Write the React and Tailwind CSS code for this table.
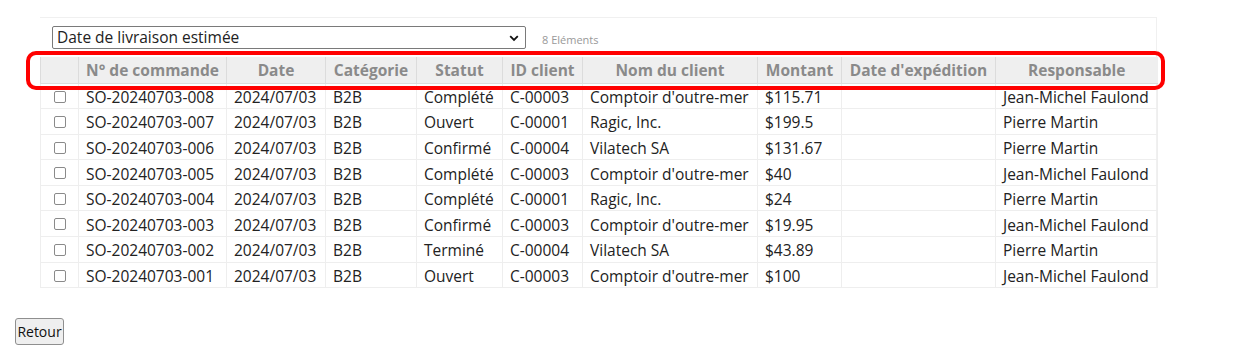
import React from "react";

const cols = [
  { label: "", w: 38 },
  { label: "N° de commande", w: 148 },
  { label: "Date", w: 99 },
  { label: "Catégorie", w: 91 },
  { label: "Statut", w: 86 },
  { label: "ID client", w: 80 },
  { label: "Nom du client", w: 175 },
  { label: "Montant", w: 84 },
  { label: "Date d'expédition", w: 154 },
  { label: "Responsable", w: 162 },
];

const rows = [
  ["SO-20240703-008", "2024/07/03", "B2B", "Complété", "C-00003", "Comptoir d'outre-mer", "$115.71", "", "Jean-Michel Faulond"],
  ["SO-20240703-007", "2024/07/03", "B2B", "Ouvert", "C-00001", "Ragic, Inc.", "$199.5", "", "Pierre Martin"],
  ["SO-20240703-006", "2024/07/03", "B2B", "Confirmé", "C-00004", "Vilatech SA", "$131.67", "", "Pierre Martin"],
  ["SO-20240703-005", "2024/07/03", "B2B", "Complété", "C-00003", "Comptoir d'outre-mer", "$40", "", "Jean-Michel Faulond"],
  ["SO-20240703-004", "2024/07/03", "B2B", "Complété", "C-00001", "Ragic, Inc.", "$24", "", "Pierre Martin"],
  ["SO-20240703-003", "2024/07/03", "B2B", "Confirmé", "C-00003", "Comptoir d'outre-mer", "$19.95", "", "Jean-Michel Faulond"],
  ["SO-20240703-002", "2024/07/03", "B2B", "Terminé", "C-00004", "Vilatech SA", "$43.89", "", "Pierre Martin"],
  ["SO-20240703-001", "2024/07/03", "B2B", "Ouvert", "C-00003", "Comptoir d'outre-mer", "$100", "", "Jean-Michel Faulond"],
];

export default function App() {
  return (
    <div className="relative w-[1235px] h-[353px] bg-white font-['Open_Sans',sans-serif] text-[#222]">
      <div className="pt-[17px] pl-[40px]">
        <div className="w-[1117px] border-t border-r border-[#f0f0f0]">
          <div className="flex items-center pl-[12px] pt-[8px] pb-[8px]">
            <div className="relative flex items-center w-[474px] h-[23px] border border-[#7a7a7a] rounded-[2px] pl-[4px] text-[15.5px] leading-none">
              <span>Date de livraison estimée</span>
              <svg className="absolute right-[6px] top-[8px]" width="10" height="7" viewBox="0 0 10 7">
                <path d="M1.2 1.2 L5 5 L8.8 1.2" fill="none" stroke="#111" strokeWidth="1.8" />
              </svg>
            </div>
            <span className="ml-[16px] text-[11px] text-[#999] mt-[5px]">8 Eléments</span>
          </div>
          <table className="border-collapse table-fixed w-[1117px] text-[15.5px]">
            <colgroup>
              {cols.map((c, i) => (
                <col key={i} style={{ width: c.w }} />
              ))}
            </colgroup>
            <thead>
              <tr className="h-[26px] bg-[#efefef]">
                {cols.map((c, i) => (
                  <th
                    key={i}
                    className="border-l border-b border-[#dcdcdc] p-0 text-center font-bold text-[#8a8a8a] leading-[20px] whitespace-nowrap"
                  >
                    {c.label}
                  </th>
                ))}
              </tr>
            </thead>
            <tbody>
              {rows.map((r, ri) => (
                <tr key={ri} className="h-[25.6px]">
                  <td className="border border-[#eeeeee] p-0 align-top">
                    <div className="mx-auto mt-[7px] w-[12px] h-[12px] border border-[#8a8a8a] rounded-[2px] bg-white"></div>
                  </td>
                  {r.map((v, ci) => (
                    <td
                      key={ci}
                      className="border border-[#eeeeee] pt-[2px] pb-0 pl-[7px] pr-[1px] leading-[20px] whitespace-nowrap overflow-hidden align-middle"
                    >
                      {v}
                    </td>
                  ))}
                </tr>
              ))}
            </tbody>
          </table>
        </div>
      </div>
      <div className="pl-[15px] pt-[30px]">
        <button className="h-[27px] w-[49px] border border-[#8f8f8f] rounded-[3px] bg-[#efefef] text-[14px] text-[#111] leading-none">
          Retour
        </button>
      </div>
      <div className="absolute left-[26px] top-[51px] w-[1139px] h-[39px] border-4 border-[#ff0000] rounded-[10px] pointer-events-none"></div>
    </div>
  );
}
